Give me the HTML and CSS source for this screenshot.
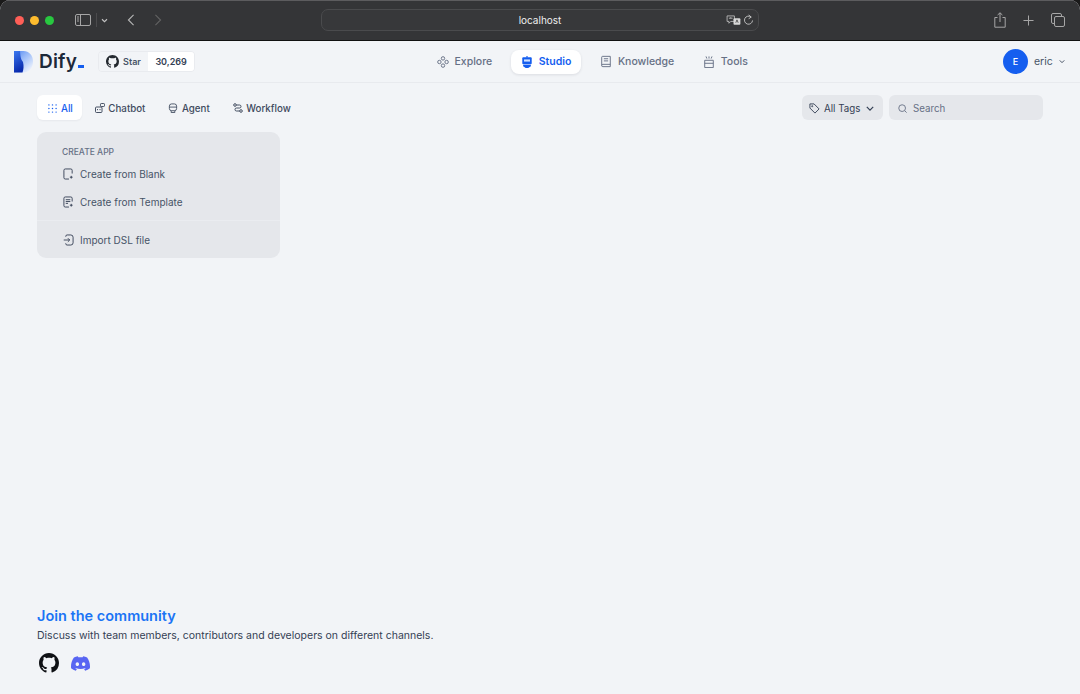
FILE: index.html
```html
<!DOCTYPE html>
<html lang="en">
<head>
<meta charset="utf-8">
<title>Dify</title>
<link rel="stylesheet" href="styles.css">
</head>
<body>
<div class="window">
  <div class="toolbar">
    <div class="tb-left">
      <div class="lights"><i class="light red"></i><i class="light yellow"></i><i class="light green"></i></div>
      <svg class="tb-sidebar" viewBox="0 0 16 12" width="16" height="12" fill="none" stroke="#a6a6a6" stroke-width="1"><rect x=".5" y=".5" width="15" height="11" rx="1.5"/><path d="M5.500 .5v11" /><path d="M2 3h2M2 5h2M2 7h2" /></svg>
      <i class="tb-sep"></i>
      <svg class="tb-chev" viewBox="0 0 8 6" width="7" height="5" fill="none" stroke="#c4c4c4" stroke-width="1.300"><path d="M1 1.500l3 3 3-3"/></svg>
      <svg class="tb-back" viewBox="0 0 8 14" width="8" height="12" fill="none" stroke="#b5b5b5" stroke-width="1.300"><path d="M7 1L1 7l6 6"/></svg>
      <svg class="tb-fwd" viewBox="0 0 8 14" width="8" height="12" fill="none" stroke="#626262" stroke-width="1.300"><path d="M1 1l6 6-6 6"/></svg>
    </div>
    <div class="addr">
      <span class="addr-text">localhost</span>
      <div class="addr-icons">
        <svg viewBox="0 0 16 12" width="15" height="11" fill="none" stroke="#c4c4c4" stroke-width=".9"><path d="M1 1h8v6H5L3 9V7H1z"/><path d="M3 3.500h4M5 2.500v1"/><rect x="8" y="3.500" width="7.500" height="7" rx="1" fill="#d8d8d8" stroke="none"/><path d="M10.500 8.500l1.300-3.200 1.300 3.200" stroke="#333" stroke-width=".8"/></svg>
        <svg viewBox="0 0 12 12" width="11" height="12" fill="none" stroke="#c4c4c4" stroke-width="1"><path d="M8.800 2.800A4.400 4.400 0 1 0 10.400 6.500"/><path d="M6.200 .5l2.800 2.300-2.800 1.800" /></svg>
      </div>
    </div>
    <div class="tb-right">
      <svg viewBox="0 0 12 16" width="12" height="16" fill="none" stroke="#a6a6a6" stroke-width="1"><path d="M3.500 5.500H.8v9.700h10.400V5.500H8.500"/><path d="M6 10V.8M3.600 3L6 .8 8.400 3"/></svg>
      <svg viewBox="0 0 12 12" width="11" height="11" fill="none" stroke="#a6a6a6" stroke-width="1.100"><path d="M6 .5v11M.5 6h11"/></svg>
      <svg viewBox="0 0 14 14" width="14" height="14" fill="none" stroke="#a6a6a6" stroke-width="1"><rect x="3.500" y="3.500" width="10" height="10" rx="1.500"/><path d="M3.500 10.500H2A1.500 1.500 0 0 1 .5 9V2A1.500 1.500 0 0 1 2 .5h7A1.500 1.500 0 0 1 10.500 2v1.500"/></svg>
    </div>
  </div>

  <header class="header">
    <div class="brand">
      <div class="logo">
        <svg viewBox="0 0 19 22" width="19" height="22"><defs><linearGradient id="lgBody" x1="0" y1="0" x2=".8" y2="1"><stop offset="0" stop-color="#4f86f2"/><stop offset=".45" stop-color="#9dbdf8"/><stop offset="1" stop-color="#f3f6fd"/></linearGradient><linearGradient id="lgStrip" x1="0" y1="0" x2=".3" y2="1"><stop offset="0" stop-color="#3b78f0"/><stop offset="1" stop-color="#0a2cae"/></linearGradient></defs><path d="M0 0h9.500C15 0 19 4.300 19 10.500S15 21.500 9.500 21.500H0z" fill="url(#lgBody)"/><path d="M0 0h6c.5 5 .5 8 3 11 1 4 .5 8-.5 10.500H0z" fill="url(#lgStrip)"/></svg>
        <span class="logo-text">Dify<span class="logo-cursor"></span></span>
      </div>
      <div class="gh-badge">
        <span class="gh-star">
          <svg viewBox="0 0 16 16" width="13" height="13" fill="#24292f"><path d="M8 0C3.580 0 0 3.580 0 8c0 3.540 2.290 6.530 5.470 7.590.4.070.550-.170.550-.380 0-.190-.010-.820-.010-1.490-2.010.370-2.530-.490-2.690-.940-.090-.230-.480-.940-.820-1.130-.280-.150-.680-.520-.010-.530.630-.010 1.080.580 1.230.820.720 1.210 1.870.870 2.330.660.070-.520.280-.870.510-1.070-1.780-.200-3.640-.890-3.640-3.950 0-.870.310-1.590.820-2.150-.080-.200-.360-1.020.080-2.120 0 0 .670-.210 2.200.820.640-.180 1.320-.270 2-.270s1.360.090 2 .270c1.530-1.040 2.200-.820 2.200-.820.440 1.100.160 1.920.080 2.120.510.560.820 1.270.820 2.150 0 3.070-1.870 3.750-3.650 3.950.290.250.540.730.540 1.480 0 1.070-.010 1.930-.010 2.200 0 .210.150.460.550.380A8.010 8.010 0 0 0 16 8c0-4.420-3.580-8-8-8z"/></svg>
          Star
        </span>
        <span class="gh-count">30,269</span>
      </div>
    </div>
    <nav class="nav">
      <a class="nav-item">
        <svg viewBox="0 0 14 14" width="12" height="12" fill="none" stroke="#667085" stroke-width="1.100"><circle cx="7" cy="2.800" r="2"/><circle cx="7" cy="11.200" r="2"/><circle cx="2.800" cy="7" r="2"/><circle cx="11.200" cy="7" r="2"/></svg>
        Explore
      </a>
      <a class="nav-item nav-active">
        <svg viewBox="0 0 14 14" width="12" height="12" fill="#155eef"><rect x="6.300" y="0" width="1.400" height="2"/><rect x="1.500" y="1.500" width="11" height="8" rx="1"/><path d="M2.500 10.200h9V12l-3 2H5.500l-3-2z"/><rect x="3.500" y="4" width="7" height="2.500" fill="#cfe0ff"/></svg>
        Studio
      </a>
      <a class="nav-item">
        <svg viewBox="0 0 14 14" width="12" height="13" fill="none" stroke="#667085" stroke-width="1.100"><path d="M2 11.500V2a1 1 0 0 1 1-1h9v12H3.300A1.300 1.300 0 0 1 2 11.500zM2 11.500a1.300 1.300 0 0 1 1.300-1.200H12M4.500 3.800h5M4.500 6.300h5"/></svg>
        Knowledge
      </a>
      <a class="nav-item">
        <svg viewBox="0 0 14 14" width="12" height="12" fill="none" stroke="#667085" stroke-width="1.100"><path d="M2 5h10v8.500H2zM2 8.500h10M3.500 .5L4.500 3M10.500 .5L9.500 3M7 .5v2.500" /></svg>
        Tools
      </a>
    </nav>
    <div class="account">
      <span class="avatar">E</span>
      <span class="account-name">eric</span>
      <svg viewBox="0 0 8 6" width="6" height="5" fill="none" stroke="#344054" stroke-width="1.200"><path d="M1 1.500l3 3 3-3"/></svg>
    </div>
  </header>

  <main class="main">
    <div class="filters">
      <div class="tabs">
        <a class="tab tab-active">
          <svg viewBox="0 0 10 10" width="9" height="9" fill="#155eef"><circle cx="1" cy="1" r=".8"/><circle cx="5" cy="1" r=".8"/><circle cx="9" cy="1" r=".8"/><circle cx="1" cy="5" r=".8"/><circle cx="5" cy="5" r=".8"/><circle cx="9" cy="5" r=".8"/><circle cx="1" cy="9" r=".8"/><circle cx="5" cy="9" r=".8"/><circle cx="9" cy="9" r=".8"/></svg>
          All
        </a>
        <a class="tab">
          <svg viewBox="0 0 10 10" width="10" height="10" fill="none" stroke="#344054" stroke-width=".9"><rect x=".5" y="4" width="6.500" height="5.500" rx="1"/><rect x="5.500" y=".5" width="4" height="3" rx=".8"/><path d="M2.500 6v1.200M5 6v1.200"/></svg>
          Chatbot
        </a>
        <a class="tab">
          <svg viewBox="0 0 10 11" width="10" height="10" fill="none" stroke="#344054" stroke-width=".9"><rect x="1" y="1" width="8" height="7.500" rx="2.500"/><path d="M1 4.500h8M3 8.500v2h4v-2"/></svg>
          Agent
        </a>
        <a class="tab">
          <svg viewBox="0 0 10 10" width="10" height="10" fill="none" stroke="#344054" stroke-width=".9"><circle cx="2" cy="2" r="1.300"/><circle cx="8" cy="8" r="1.300"/><path d="M3.300 2h3.200a1.500 1.500 0 0 1 0 3h-3a1.500 1.500 0 0 0 0 3h3.200"/></svg>
          Workflow
        </a>
      </div>
      <div class="filter-right">
        <div class="tags">
          <svg viewBox="0 0 12 12" width="11" height="11" fill="none" stroke="#344054" stroke-width="1"><path d="M1 1h4.500L11 6.500 6.500 11 1 5.500z" stroke-linejoin="round"/><circle cx="3.500" cy="3.500" r=".6"/></svg>
          <span>All Tags</span>
          <svg class="tags-chev" viewBox="0 0 10 6" width="8" height="5" fill="none" stroke="#344054" stroke-width="1.500"><path d="M1 1l4 4 4-4"/></svg>
        </div>
        <div class="search">
          <svg viewBox="0 0 12 12" width="9" height="9" fill="none" stroke="#667085" stroke-width="1.200"><circle cx="5.500" cy="5.500" r="4.500"/><path d="M9 9l2.500 2.500"/></svg>
          <span>Search</span>
        </div>
      </div>
    </div>

    <section class="card">
      <div class="card-title">CREATE APP</div>
      <a class="card-row">
        <svg viewBox="0 0 12 13" width="11" height="12" fill="none" stroke="#344054" stroke-width="1"><path d="M6.500 12H2.500A1.500 1.500 0 0 1 1 10.500v-8A1.500 1.500 0 0 1 2.500 1h6A1.500 1.500 0 0 1 10 2.500V6M9 8.500v3M7.500 10h3"/></svg>
        Create from Blank
      </a>
      <a class="card-row">
        <svg viewBox="0 0 12 13" width="11" height="12" fill="none" stroke="#344054" stroke-width="1"><path d="M6.500 12H2.500A1.500 1.500 0 0 1 1 10.500v-8A1.500 1.500 0 0 1 2.500 1h6A1.500 1.500 0 0 1 10 2.500V6M3 4h5M3 6h5M3 8h2.500M9 8.500v3M7.500 10h3"/></svg>
        Create from Template
      </a>
      <div class="card-divider"></div>
      <a class="card-row">
        <svg viewBox="0 0 12 13" width="11" height="12" fill="none" stroke="#344054" stroke-width="1"><path d="M3 3V2.500A1.500 1.500 0 0 1 4.500 1h4A2.500 2.500 0 0 1 11 3.500v6A2.500 2.500 0 0 1 8.500 12h-4A1.500 1.500 0 0 1 3 10.500V10M.8 6.500h6.500M5.300 4.500l2 2-2 2"/></svg>
        Import DSL file
      </a>
    </section>

    <footer class="community">
      <h2 class="community-title">Join the community</h2>
      <p class="community-text">Discuss with team members, contributors and developers on different channels.</p>
      <div class="community-links">
        <svg viewBox="0 0 16 16" width="20" height="20" fill="#0f1115"><path d="M8 0C3.580 0 0 3.580 0 8c0 3.540 2.290 6.530 5.470 7.590.4.070.550-.170.550-.380 0-.190-.010-.820-.010-1.490-2.010.370-2.530-.490-2.690-.940-.090-.230-.480-.940-.820-1.130-.280-.150-.680-.520-.010-.530.630-.010 1.080.580 1.230.820.720 1.210 1.870.870 2.330.660.070-.520.280-.870.510-1.070-1.780-.200-3.640-.890-3.640-3.950 0-.870.310-1.590.820-2.150-.080-.200-.360-1.020.080-2.120 0 0 .670-.210 2.200.820.640-.180 1.320-.270 2-.270s1.360.090 2 .270c1.530-1.040 2.200-.820 2.200-.820.440 1.100.160 1.920.080 2.120.510.560.820 1.270.820 2.150 0 3.070-1.870 3.750-3.650 3.950.290.250.540.730.540 1.480 0 1.070-.010 1.930-.010 2.200 0 .210.150.460.550.380A8.010 8.010 0 0 0 16 8c0-4.420-3.580-8-8-8z"/></svg>
        <svg viewBox="0 0 127.140 96.360" width="19" height="15" fill="#5865f2"><path d="M107.700 8.070A105.150 105.150 0 0 0 81.470 0a72.060 72.060 0 0 0-3.360 6.830 97.680 97.680 0 0 0-29.110 0A72.370 72.370 0 0 0 45.640 0a105.890 105.890 0 0 0-26.250 8.090C2.790 32.650-1.710 56.600.54 80.210a105.730 105.730 0 0 0 32.170 16.150 77.700 77.700 0 0 0 6.890-11.110 68.420 68.420 0 0 1-10.850-5.180c.91-.66 1.800-1.340 2.660-2a75.570 75.570 0 0 0 64.320 0c.87.710 1.760 1.390 2.660 2a68.680 68.680 0 0 1-10.870 5.190 77 77 0 0 0 6.890 11.100 105.250 105.250 0 0 0 32.190-16.140c2.640-27.380-4.510-51.110-18.900-72.150zM42.450 65.690C36.180 65.690 31 60 31 53s5-12.740 11.430-12.740S54 46 53.890 53s-5.050 12.690-11.440 12.690zm42.240 0C78.410 65.690 73.250 60 73.250 53s5-12.740 11.440-12.740S96.230 46 96.120 53s-5.040 12.690-11.430 12.690z"/></svg>
      </div>
    </footer>
  </main>
</div>
</body>
</html>
```
FILE: styles.css
```css
* { box-sizing: border-box; }
html, body { margin: 0; height: 100%; }
body { font-family: Inter, "Liberation Sans", sans-serif; background: #1a1a1a; overflow: hidden; }
a { color: inherit; text-decoration: none; }
svg { display: block; flex: none; }

.window { height: 694px; display: flex; flex-direction: column; background: #f2f4f7; border-radius: 10px 10px 0 0; overflow: hidden; }

.toolbar { height: 41px; flex: none; display: flex; align-items: center; padding: 0 15px 1px 15px; background: #343537; border-top: 1px solid #5c5c5e; border-bottom: 1px solid #111; justify-content: space-between; }
.tb-left { display: flex; align-items: center; width: 306px; }
.lights { display: flex; gap: 6px; margin-right: 21px; }
.light { width: 9px; height: 9px; border-radius: 50%; display: block; }
.red { background: #ff5f57; }
.yellow { background: #febc2e; }
.green { background: #28c840; }
.tb-sep { width: 1px; height: 14px; background: #4b4b4d; margin: 0 4px 0 5px; }
.tb-chev { margin-right: 19px; }
.tb-fwd { margin-left: 19px; }
.addr { width: 438px; height: 22px; margin-right: auto; border: 1px solid #4a4b4d; border-radius: 7px; background: #37383a; display: flex; align-items: center; justify-content: center; position: relative; font-size: 10px; color: #eee; }
.addr-icons { position: absolute; right: 4px; top: 4px; display: flex; gap: 2px; align-items: center; }
.tb-right { display: flex; gap: 17px; align-items: center; }

.header { height: 42px; flex: none; display: flex; align-items: center; padding: 0 15px 0 14px; border-bottom: 1px solid #e8eaee; }
.brand { display: flex; align-items: center; gap: 15px; width: 413px; }
.logo { display: flex; align-items: center; gap: 6px; }
.logo-text { font-size: 19px; font-weight: 600; color: #1d2939; letter-spacing: .2px; display: flex; align-items: baseline; }
.logo-cursor { display: block; width: 6px; height: 3px; background: #155eef; margin-left: 1px; }
.gh-badge { display: flex; height: 21px; border: 1px solid #e9ebef; border-radius: 4px; font-size: 9px; font-weight: 600; overflow: hidden; margin-left: -1px; }
.gh-star { display: flex; align-items: center; gap: 4px; padding: 0 7.500px 0 7px; background: #f2f4f7; color: #475467; }
.gh-count { display: flex; align-items: center; padding: 0 7px; background: #fff; color: #344054; }

.nav { display: flex; align-items: center; margin-right: auto; }
.nav-item { display: flex; align-items: center; gap: 6px; height: 24px; padding: 0 9.500px; font-size: 10.500px; font-weight: 500; color: #667085; border-radius: 8px; }
.nav-item + .nav-item { margin-left: 9.500px; }
.nav-active { background: #fff; color: #155eef; font-weight: 600; box-shadow: 0 1px 3px rgba(16, 24, 40, .1); }

.account { display: flex; align-items: center; gap: 6px; width: 62px; font-size: 10.500px; color: #475467; }
.avatar { width: 25px; height: 25px; border-radius: 50%; background: #155eef; color: #fff; display: flex; align-items: center; justify-content: center; font-size: 9px; font-weight: 500; }

.main { flex: 1; min-height: 0; display: flex; flex-direction: column; padding: 12px 37px 21px; }
.filters { display: flex; justify-content: space-between; align-items: center; height: 25px; }
.tabs { display: flex; gap: 3px; }
.tab { display: flex; align-items: center; gap: 3.500px; height: 25px; padding: 1px 10px 0; border-radius: 6px; font-size: 9.750px; font-weight: 500; color: #404a5e; }
.tab-active { gap: 4px; padding: 1px 9px 0 11px; background: #fff; color: #155eef; box-shadow: 0 1px 2px rgba(16, 24, 40, .05); }
.filter-right { display: flex; gap: 6px; }
.tags { width: 81px; height: 25px; display: flex; align-items: center; gap: 4px; padding: 1px 7px 0; background: #e5e7eb; border-radius: 6px; font-size: 9.750px; color: #344054; }
.tags-chev { margin-left: 2px; }
.search { width: 154px; height: 25px; display: flex; align-items: center; gap: 6px; padding: 1px 9px 0; background: #e5e7eb; border-radius: 6px; font-size: 9.750px; color: #667085; }

.card { width: 243px; height: 126px; margin-top: 12px; padding: 15px 0 0; background: #e5e7eb; border-radius: 9px; }
.card-title { padding-left: 25px; font-size: 8.500px; font-weight: 500; color: #667085; line-height: 11px; margin-bottom: 2px; }
.card-row { display: flex; align-items: center; gap: 6px; height: 28px; padding-left: 26px; font-size: 10px; color: #475467; }
.card-divider { height: 1px; background: #eaecf0; margin: 4px 0 4.500px; }

.community { margin-top: auto; }
.community-title { margin: 0; font-size: 14.500px; line-height: 20px; font-weight: 600; color: #1b74f5; }
.community-text { margin: 2px 0 0; font-size: 10.500px; line-height: 15px; color: #344054; }
.community-links { display: flex; align-items: center; gap: 12px; margin-top: 10px; padding-left: 2px; }
```
